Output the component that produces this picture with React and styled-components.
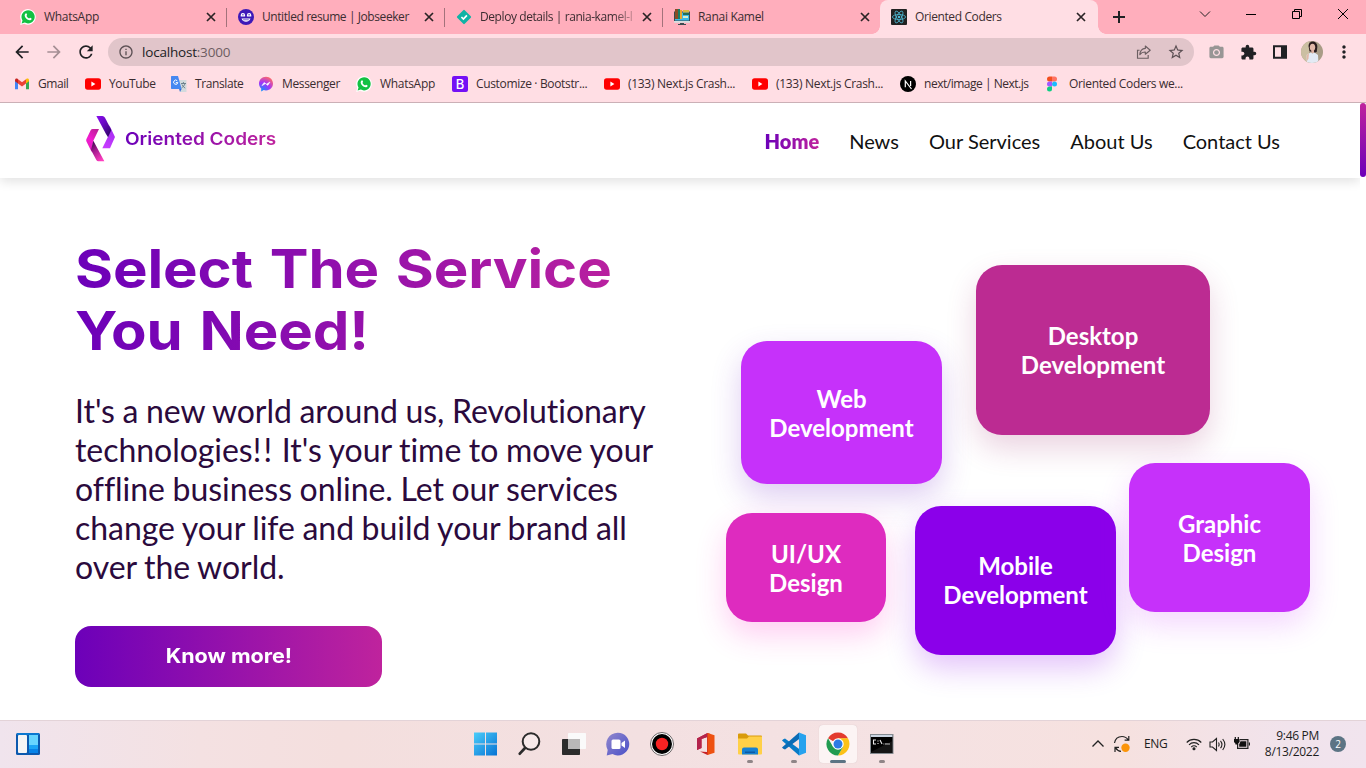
import React from "react";
import styled, { createGlobalStyle, css } from "styled-components";
import {
  MdArrowBack, MdArrowForward, MdRefresh, MdInfoOutline, MdStarBorder,
  MdPhotoCamera, MdExtension, MdMoreVert,
} from "react-icons/md";

const brand = "linear-gradient(90deg, #6c00b9 0%, #bf239d 100%)";

const GlobalStyle = createGlobalStyle`
  * { box-sizing: border-box; }
  body { margin: 0; background: #fff; overflow: hidden; font-family: "Open Sans", "Noto Sans", sans-serif; }
  h1, p { margin: 0; }
  svg { display: block; flex: none; }
`;

const Screen = styled.div`
  width: 1366px;
  height: 768px;
  display: flex;
  flex-direction: column;
  overflow: hidden;
`;

/* ---------- browser chrome ---------- */
const TabStrip = styled.div`
  height: 34px;
  flex: none;
  display: flex;
  padding-left: 8px;
  background: #ffaebc;
`;

const Tab = styled.div`
  position: relative;
  width: 218px;
  height: 34px;
  display: flex;
  align-items: center;
  padding: 0 ${(p) => (p.$active ? 12 : 10)}px 0 ${(p) => (p.$active ? 11 : 12)}px;
  color: #3c2d31;
  ${(p) => p.$divider && css`
    &::after { content: ""; position: absolute; right: -1px; top: 8px; width: 1px; height: 19px; background: #a3727b; }
  `}
  ${(p) => p.$active && css`
    background: #ffdee4;
    border-radius: 8px 8px 0 0;
    &::before, &::after { content: ""; position: absolute; bottom: 0; width: 8px; height: 8px; }
    &::before { left: -8px; background: radial-gradient(circle at 0 0, transparent 7.5px, #ffdee4 8px); }
    &::after { right: -8px; background: radial-gradient(circle at 100% 0, transparent 7.5px, #ffdee4 8px); }
  `}
`;

const Label = styled.span`
  font-size: 12px;
  line-height: 16px;
  white-space: nowrap;
  letter-spacing: ${(p) => p.$track ?? -0.3}px;
`;

const TabLabel = styled(Label)`
  flex: 1;
  margin-left: 8px;
  ${(p) => p.$fade && css`mask-image: linear-gradient(90deg, #000 82%, rgba(0, 0, 0, 0.1) 98%);`}
`;

const NewTab = styled.div`
  width: 42px;
  display: flex;
  align-items: center;
  justify-content: center;
`;

const WindowButtons = styled.div`
  margin-left: auto;
  display: flex;
  height: 28px;
  align-items: center;
`;

const WindowButton = styled.div`
  width: 46px;
  display: flex;
  justify-content: center;
`;

const Toolbar = styled.div`
  height: 36px;
  flex: none;
  display: flex;
  align-items: center;
  padding-left: 6px;
  padding-right: 6px;
  background: #ffdee4;
  color: #202124;
`;

const ToolSlot = styled.div`
  width: 32px;
  height: 32px;
  display: flex;
  align-items: center;
  justify-content: center;
  color: ${(p) => p.$color || "#202124"};
`;

const AddressBar = styled.div`
  width: 1086px;
  height: 28px;
  margin: 0 6px;
  border-radius: 14px;
  background: #e1c5ca;
  display: flex;
  align-items: center;
  padding: 0 2px 0 10px;
`;

const Url = styled.span`
  flex: 1;
  margin-left: 8px;
  font-size: 13.5px;
  letter-spacing: -0.2px;
  color: #202124;
  span { color: #6d5d61; }
`;

const Bookmarks = styled.div`
  height: 33px;
  flex: none;
  display: flex;
  align-items: center;
  padding: 0 0 4px 14px;
  background: #ffdee4;
  border-bottom: 1px solid #cbb0b6;
`;

const Bookmark = styled.div`
  width: ${(p) => p.$w}px;
  display: flex;
  align-items: center;
  gap: 8px;
  color: #3a2c30;
`;

/* ---------- web page ---------- */
const Viewport = styled.div`
  height: 617px;
  flex: none;
  display: flex;
  overflow: hidden;
  background: #fff;
`;

const Page = styled.main`
  width: 1360px;
  overflow: hidden;
`;

const ScrollTrack = styled.div`
  width: 6px;
`;

const ScrollThumb = styled.div`
  height: 74px;
  border-radius: 3px;
  background: linear-gradient(#bf239d, #6c00b9);
`;

const Navbar = styled.header`
  height: 75px;
  display: flex;
  align-items: center;
  justify-content: space-between;
  padding: 0 80px 0 86px;
  background: #fff;
  box-shadow: 0 4px 10px rgba(0, 0, 0, 0.11);
`;

const Brand = styled.div`
  display: flex;
  align-items: center;
  gap: 10px;
  padding-bottom: 4px;
`;

const gradientText = css`
  background: ${brand};
  background-clip: text;
  -webkit-background-clip: text;
  color: transparent;
`;

const Wordmark = styled.span`
  ${gradientText}
  font: 600 17.4px/24px Inter, sans-serif;
  white-space: nowrap;
  transform: scaleX(${(p) => p.$stretch});
  transform-origin: left;
`;

const NavLinks = styled.nav`
  display: flex;
  gap: 30px;
  padding-top: 1px;
`;

const NavLink = styled.a`
  font: 400 20px/24px Lato, sans-serif;
  color: #111;
  ${(p) => p.$active && css`font-weight: 800; ${gradientText}`}
`;

const Hero = styled.section`
  display: flex;
  padding: 60px 0 0 75px;
`;

const Copy = styled.div`
  width: 651px;
  flex: none;
`;

const Title = styled.h1`
  ${gradientText}
  width: 540px;
  font: 700 53.8px/61.6px Inter, sans-serif;
  word-spacing: 3px;
  letter-spacing: -0.1px;
  white-space: pre-line;
  transform: scaleX(${(p) => p.$stretch});
  transform-origin: left;
`;

const Lead = styled.p`
  width: 600px;
  margin-top: 30px;
  font: 400 32px Lato, sans-serif;
  line-height: 39px;
  letter-spacing: -0.04px;
  word-spacing: -0.55px;
  color: #2b0a3d;
`;

const Loose = styled.span`
  letter-spacing: 2.2px;
`;

const CallToAction = styled.button`
  display: flex;
  align-items: center;
  justify-content: center;
  width: 307px;
  height: 61px;
  margin-top: 40px;
  padding: 0 0 2px;
  border: 0;
  border-radius: 16px;
  background: ${brand};
  color: #fff;
  font: 700 19.4px Inter, sans-serif;
  span { transform: scaleX(1.11); }
`;

const Services = styled.div`
  width: 634px;
  flex: none;
  padding-top: 27px;
`;

const ServiceRow = styled.div`
  display: flex;
  align-items: flex-start;
  margin-top: ${(p) => p.$top || 0}px;
`;

const ServiceCard = styled.div`
  width: ${(p) => p.$w}px;
  height: ${(p) => p.$h}px;
  margin: ${(p) => p.$top || 0}px 0 0 ${(p) => p.$left || 0}px;
  padding-bottom: ${(p) => p.$lift || 0}px;
  flex: none;
  display: flex;
  align-items: center;
  justify-content: center;
  text-align: center;
  white-space: pre-line;
  border-radius: 26px;
  background: ${(p) => p.$color};
  box-shadow: 0 13px 30px ${(p) => p.$shadow};
  color: #fff;
  font: 700 24px Lato, sans-serif;
  line-height: 29px;
`;

/* ---------- taskbar ---------- */
const Taskbar = styled.footer`
  height: 48px;
  flex: none;
  display: flex;
  align-items: center;
  padding-bottom: 1px;
  border-top: 1px solid #e3d3d8;
  background: linear-gradient(90deg, #f0e4ed 0, #f4e1e2 200px, #f4dfde 340px, #f3e0e1 640px, #f5e2e3 900px, #f6e1df 1120px, #f1e3ec 1290px, #f1e4ee 100%);
  color: #1d1d1d;
`;

const Widgets = styled.div`
  width: 464px;
  padding-left: 16px;
`;

const TaskButton = styled.div`
  position: relative;
  width: 44px;
  height: 46px;
  display: flex;
  align-items: center;
  justify-content: center;
  &::before {
    content: "";
    position: absolute;
    inset: 4px 3px 4px;
    border-radius: 4px;
    background: ${(p) => (p.$active ? "#fcf4f4" : "transparent")};
    box-shadow: ${(p) => (p.$active ? "0 0 1px #cdbdbf" : "none")};
  }
  &::after {
    content: "";
    position: absolute;
    bottom: 4px;
    height: 3px;
    border-radius: 2px;
    width: ${(p) => (p.$active ? 16 : p.$running ? 6 : 0)}px;
    background: ${(p) => (p.$active ? "#5c7484" : "#8f8587")};
  }
  svg { position: relative; }
`;

const Tray = styled.div`
  margin-left: auto;
  padding-right: 20px;
  display: flex;
  align-items: center;
`;

const TrayItem = styled.div`
  margin-left: ${(p) => p.$gap}px;
`;

const Language = styled(Label)`
  margin-left: 13px;
  width: 25px;
`;

const Clock = styled.div`
  width: 62px;
  margin-left: 7px;
  text-align: right;
  display: flex;
  flex-direction: column;
`;

const Notices = styled.div`
  width: 16px;
  height: 16px;
  margin-left: 11px;
  border-radius: 50%;
  background: #5c7484;
  color: #fff;
  font-size: 10px;
  line-height: 16px;
  text-align: center;
`;

const Badge = styled.div`
  width: 16px;
  height: 16px;
  flex: none;
  display: flex;
  align-items: center;
  justify-content: center;
  border-radius: ${(p) => p.$round};
  background: ${(p) => p.$bg};
  color: #fff;
  font: ${(p) => p.$font || "700 11px Inter, sans-serif"};
`;

/* ---------- icons ---------- */
const Svg = ({ s = 16, box = 16, children, ...rest }) => (
  <svg width={s} height={s} viewBox={`0 0 ${box} ${box}`} fill="none" {...rest}>{children}</svg>
);

const Close = () => (
  <Svg s={10} box={10} stroke="#2a2325" strokeWidth="1.700"><path d="m1 1 8 8M9 1 1 9" /></Svg>
);
const Plus = () => (
  <Svg s={12} box={12} stroke="#202124" strokeWidth="2"><path d="M6 0v12M0 6h12" /></Svg>
);
const WhatsApp = () => (
  <Svg>
    <path d="M.2 15.900 1.200 11.800A7.800 7.800 0 1 1 4.300 14.800Z" fill="#fff" />
    <path d="M1.600 14.500 2.500 11.400A6.600 6.600 0 1 1 4.800 13.600Z" fill="#12c143" />
    <path d="M5.600 4.400c.4-.3.8-.2 1 .3l.5 1.100c.1.4-.5.8-.6 1.100.6 1.200 1.400 2 2.600 2.500.4-.1.7-.8 1.100-.7l1.300.7c.4.5-.3 1.700-1.300 1.900-2.600.3-5.800-2.800-5.500-5.200.1-.7.4-1.300.9-1.700Z" fill="#fff" />
  </Svg>
);
const Jobseeker = () => (
  <Svg>
    <circle cx="8" cy="8" r="8" fill="#3d18b8" />
    <path d="M3.300 6.800V6.200a1.600 1.600 0 0 1 3.200 0v.6ZM9.500 6.800V6.200a1.600 1.600 0 0 1 3.200 0v.6Z" stroke="#fff" strokeWidth="1.200" />
    <path d="M3.500 9.600h9c-.8 2.200-2.500 3.200-4.500 3.200s-3.700-1-4.500-3.200Z" fill="#fff" />
    <path d="M5.200 10.800h5.600" stroke="#3d18b8" strokeWidth=".7" />
  </Svg>
);
const Deploy = () => (
  <Svg>
    <rect x="2.700" y="2.700" width="10.600" height="10.600" rx="1" transform="rotate(45 8 8)" fill="#10b3a5" />
    <path d="m5.400 8 2 2 3.500-3.700" stroke="#fff" strokeWidth="1.700" />
  </Svg>
);
const Library = () => (
  <Svg>
    <rect x=".5" y="3" width="15" height="9" fill="#3bb9e8" stroke="#3a4a50" />
    <path d="M0 12h16v1.800H0Z" fill="#d9dcdd" />
    <path d="M6 14h4v1H6ZM4 15h8v1H4Z" fill="#3a4a50" />
    <path d="M1 0h3v10H1Z" fill="#8b4b25" /><path d="M4 0h2v10H4Z" fill="#197d66" /><path d="M6 1h2v9H6Z" fill="#e8a52d" />
    <path d="M9 1h6v2.500H9Z" fill="#d8b83e" /><path d="M9 4h6v2H9Z" fill="#246d58" /><path d="M9 7h5v2H9Z" fill="#d9edc9" />
  </Svg>
);
const ReactLogo = () => (
  <Svg>
    <rect width="16" height="16" rx="1" fill="#222" />
    <g stroke="#4eb8d4" strokeWidth=".8">
      <ellipse cx="8" cy="8" rx="6.600" ry="2.500" />
      <ellipse cx="8" cy="8" rx="6.600" ry="2.500" transform="rotate(60 8 8)" />
      <ellipse cx="8" cy="8" rx="6.600" ry="2.500" transform="rotate(120 8 8)" />
    </g>
    <circle cx="8" cy="8" r="1.300" fill="#4eb8d4" />
  </Svg>
);
const Gmail = () => (
  <Svg>
    <path d="M1 4v9.300h3V6.500Z" fill="#4285f4" />
    <path d="M15 4v9.300h-3V6.500Z" fill="#34a853" />
    <path d="M1 4.200C1 2.600 2.600 2 3.800 3L4 3.200V7.600L1 5.300Z" fill="#c5221f" />
    <path d="M15 4.200c0-1.600-1.600-2.200-2.800-1.200l-.2.200v4.400l3-2.300Z" fill="#fbbc04" />
    <path d="M4 3.200 8 6.200l4-3v4.400l-4 3-4-3Z" fill="#ea4335" />
  </Svg>
);
const YouTube = () => (
  <Svg><rect y="2.300" width="16" height="11.400" rx="2.600" fill="#f00" /><path d="M6.400 5.600v4.800l4-2.400Z" fill="#fff" /></Svg>
);
const Translate = () => (
  <Svg>
    <path d="M6 4h9.500v12H9Z" fill="#d3dadd" />
    <path d="M0 .7A.7.7 0 0 1 .7 0H7l3.600 13H.7a.7.7 0 0 1-.7-.7Z" fill="#4688f1" />
    <path d="m8.200 13 2.400 0L9 16Z" fill="#3367d6" />
    <path d="M6.300 4.800A2.100 2.100 0 1 0 6.800 6.600H4.800" stroke="#fff" strokeWidth="1" />
    <path d="M10 7.500h5M12.400 6v1.500M14 7.500c-.5 2-2 3.500-3.400 4.500M11 8.500c.6 1.500 1.800 2.800 3.200 3.700" stroke="#657b86" strokeWidth=".9" />
  </Svg>
);
const Messenger = () => (
  <Svg>
    <defs><radialGradient id="msg" cx=".2" cy="1" r="1.100"><stop stopColor="#0695ff" /><stop offset=".55" stopColor="#a334fa" /><stop offset="1" stopColor="#ff6968" /></radialGradient></defs>
    <path d="M8 .8C3.800.8 1 3.800 1 7.600c0 2 .8 3.700 2.200 4.900v2.900l2.500-1.300c.7.2 1.500.3 2.300.3 4.200 0 7-3 7-6.800S12.200.8 8 .8Z" fill="url(#msg)" />
    <path d="m3.900 9.700 2.200-3.300 2.200 1.800 3.700-2.200-2.200 3.400-2.200-1.800Z" fill="#fff" stroke="#fff" strokeWidth=".5" />
  </Svg>
);
const Figma = () => (
  <Svg>
    <path d="M7 .5H4.500a2.500 2.500 0 0 0 0 5H7Z" fill="#f24e1e" /><path d="M7 .5h2.500a2.500 2.500 0 0 1 0 5H7Z" fill="#ff7262" />
    <path d="M7 5.500H4.500a2.500 2.500 0 0 0 0 5H7Z" fill="#a259ff" /><circle cx="9.500" cy="8" r="2.500" fill="#1abcfe" />
    <path d="M7 10.500H4.500A2.500 2.500 0 1 0 7 13Z" fill="#0acf83" />
  </Svg>
);
const NextLogo = () => (
  <Svg><circle cx="8" cy="8" r="8" fill="#000" /><path d="M5.300 11.300V5l6.200 8M10.600 5v5" stroke="#fff" strokeWidth="1.200" /></Svg>
);
const Share = () => (
  <Svg s={16} box={18} stroke="#6b5f62" strokeWidth="1.300">
    <path d="M4 7H1.700v9h12v-3.500" /><path d="M10.500 2.300 16 7l-5.500 4.500V9C8 8.800 6 9.700 4.300 12 4.600 8.300 6.500 5.300 10.500 5Z" strokeLinejoin="round" />
  </Svg>
);
const SidePanel = () => (
  <Svg><path d="M2 2.300h12v11.400H2Z" stroke="#202124" strokeWidth="2" /><path d="M9 2h5v12H9Z" fill="#202124" /></Svg>
);
const Avatar = () => (
  <Svg s={22} box={22}>
    <defs><clipPath id="av"><circle cx="11" cy="11" r="11" /></clipPath></defs>
    <g clipPath="url(#av)">
      <path d="M0 0h22v22H0Z" fill="#a99c86" /><path d="M0 0h8v22H0Z" fill="#cbbfa2" />
      <path d="M7.500 5c0-3 2-4.500 4.500-4.500S16.500 3 16.300 6l-.6 5-3 1-4.200-2Z" fill="#2a1d1e" />
      <ellipse cx="11.500" cy="6.300" rx="2.700" ry="3.500" fill="#e2b9a9" />
      <path d="M10.300 9h2.700v3h-2.700Z" fill="#dcb0a0" />
      <path d="M5.500 14 9.500 11.500l2 1 2-1 3.500 2.500.5 9H6Z" fill="#e3eaf4" />
      <path d="M5.500 14 8 12.500l-.5 5L6 20Z" fill="#e2b9a9" />
    </g>
  </Svg>
);
const BrandMark = () => (
  <svg width="29" height="46" viewBox="0 0 87 138">
    <defs>
      <linearGradient id="b1" x1="0" y1="0" x2=".8" y2="1"><stop stopColor="#8a0df0" /><stop offset=".45" stopColor="#6a08c4" /><stop offset="1" stopColor="#2e0466" /></linearGradient>
      <linearGradient id="b2" x1=".5" y1="0" x2=".3" y2="1"><stop stopColor="#a02af0" /><stop offset="1" stopColor="#c83cff" /></linearGradient>
      <linearGradient id="b3" x1=".7" y1="0" x2=".2" y2="1"><stop stopColor="#c0209a" /><stop offset=".5" stopColor="#f21bd0" /><stop offset="1" stopColor="#e220c0" /></linearGradient>
      <linearGradient id="b4" x1=".2" y1="0" x2=".7" y2="1"><stop stopColor="#3c0a50" /><stop offset=".4" stopColor="#a01a8c" /><stop offset="1" stopColor="#ff3fc0" /></linearGradient>
    </defs>
    <path d="M70 28 87 63 72 97H49L66 62Z" fill="url(#b2)" />
    <path d="M31 0H49Q54 0 57 5L76 42 66 64 60 54Z" fill="url(#b1)" />
    <path d="M20 39H39L22 74 17 108 1 76Q0 73 1 70L14 43Q16 39 20 39Z" fill="url(#b3)" />
    <path d="M22 74 55 136H37Q33 136 31 132L15 102Z" fill="url(#b4)" />
  </svg>
);

const WidgetIcon = () => (
  <Svg s={24} box={24}>
    <rect y="1" width="24" height="22" rx="1.500" fill="#0c59ae" /><path d="M1 1h22v2H1Z" fill="#0b78d0" />
    <rect x="2" y="3" width="9" height="18" rx="1" fill="#f5f5f5" />
    <path d="M13 3h9v10h-9Z" fill="#67d5ff" /><path d="M13 13h9v4h-9Z" fill="#1ba5f6" /><path d="M13 17h9v4h-9Z" fill="#0783e8" />
  </Svg>
);
const StartIcon = () => (
  <Svg s={24} box={24}>
    <defs><linearGradient id="win" x1="0" y1="0" x2="1" y2="1"><stop stopColor="#4bcdfa" /><stop offset="1" stopColor="#0673d4" /></linearGradient></defs>
    <path d="M0 .5h11v11H0ZM12 .5h11v11H12ZM0 12.500h11v11H0ZM12 12.500h11v11H12Z" fill="url(#win)" />
  </Svg>
);
const SearchIcon = () => (
  <Svg s={24} box={24}><circle cx="13" cy="9.500" r="8.300" stroke="#2b2b2b" strokeWidth="2" fill="#ffffff55" /><path d="m7 16-5.200 5.700" stroke="#2b2b2b" strokeWidth="2.700" strokeLinecap="round" /></Svg>
);
const TaskViewIcon = () => (
  <Svg s={24} box={24}><rect y="7" width="18" height="16" rx=".8" fill="#2c2c2c" /><rect x="6" y="1" width="18" height="16" rx=".8" fill="#fafafa" /><path d="M6 7h12v10H6Z" fill="#b9b7b7" /></Svg>
);
const ChatIcon = () => (
  <Svg s={24} box={24}>
    <defs><linearGradient id="chat" x1="0" y1="0" x2="1" y2="1"><stop stopColor="#9288cd" /><stop offset="1" stopColor="#4a50c8" /></linearGradient></defs>
    <path d="M11.700 .8A11.300 11.300 0 1 1 6.500 22L.7 23.500 1.700 18A11.500 11.500 0 0 1 11.700 .8Z" fill="url(#chat)" />
    <rect x="5.500" y="7.500" width="9" height="9.500" rx="1.500" fill="#fff" /><path d="m15.500 11 3.500-2.500v7.500l-3.500-2.400Z" fill="#fff" />
  </Svg>
);
const RecordIcon = () => (
  <Svg s={24} box={24}><circle cx="12" cy="12" r="11.500" fill="#fff" stroke="#6c6667" /><circle cx="12" cy="12" r="10" fill="#000" /><circle cx="12" cy="12" r="6.200" fill="#f82222" /></Svg>
);
const OfficeIcon = () => (
  <Svg s={24} box={24}>
    <path d="M3 6.500 13.500 1l3 1v18.500L13.500 23 6 19.500l7 .5V5L7.500 7v9L3 18Z" fill="#c62228" />
    <path d="M3 6.500 13.500 1v4L7.500 7v9L3 18Z" fill="#b3234c" /><path d="M13.500 1 20.500 3.300v17.400L13.500 23Z" fill="#ee5111" />
  </Svg>
);
const FolderIcon = () => (
  <Svg s={24} box={24}>
    <path d="M0 2.500a1 1 0 0 1 1-1h7l2 2h13a1 1 0 0 1 1 1V8H0Z" fill="#d99b0b" /><path d="M0 6.500h9l2-2h13v17a1 1 0 0 1-1 1H1a1 1 0 0 1-1-1Z" fill="#ffd048" />
    <path d="M4 22.500v-5a2 2 0 0 1 2-2h12a2 2 0 0 1 2 2v5Z" fill="#1680d2" /><path d="M7 19.500h10v1.500H7Z" fill="#0b5aa4" />
  </Svg>
);
const CodeIcon = () => (
  <Svg s={24} box={24}>
    <path d="M1.300 7.200 0 8.400 17 23.500l1.500-5.500L3 6.500Z" fill="#087bc7" /><path d="M1.300 16.800 0 15.600 17 .5 18.500 6 3 17.500Z" fill="#0a6bb5" />
    <path d="M17 .4 24 3.300v17.400L17 23.600Z" fill="#27a2ee" />
  </Svg>
);
const ChromeIcon = () => (
  <Svg s={24} box={24}>
    <path d="M12 12 2.040 6.250A11.500 11.500 0 0 1 21.960 6.250L21.960 6.500H12Z" fill="#e33b2e" />
    <path d="M12 12V6.300h9.980A11.500 11.500 0 0 1 12 23.500l5-8.600Z" fill="#fbc116" />
    <path d="M12 12l5 2.900-5 8.600A11.500 11.500 0 0 1 2.040 6.250L7 14.800Z" fill="#219b50" />
    <circle cx="12" cy="12" r="5.700" fill="#fff" /><circle cx="12" cy="12" r="4.500" fill="#2c7be5" />
  </Svg>
);
const TerminalIcon = () => (
  <Svg s={24} box={24}>
    <rect x=".5" y="2.500" width="22.500" height="19" fill="#000" stroke="#858b91" /><path d="M1 3h21.500v2H1Z" fill="#cad5e2" />
    <path d="M6 8H3.500v4H6M8 8.500v1M8 11v1M10 8l2 4M13.500 12h.8M15 12h5" stroke="#e8e8e8" strokeWidth="1.100" /><path d="M1 20 22.500 9v12H1Z" fill="#444" opacity=".3" />
  </Svg>
);
const SyncIcon = () => (
  <Svg s={18} box={18} stroke="#222" strokeWidth="1.200">
    <path d="M1.500 8C2.200 3.800 5.300 1.500 9 1.500c2.700 0 4.700 1.200 6.300 3.500M15.800 1v4.200h-4.200M8 16.300c-2.600-.2-4.300-1.500-5.500-3.700M2 17v-4.600h4" />
    <circle cx="12.500" cy="12.700" r="4.200" fill="#fb9409" stroke="none" />
  </Svg>
);
const WifiIcon = () => (
  <Svg s={16} stroke="#222" strokeWidth="1.100"><path d="M.7 6.500C4.700 2.300 11.300 2.300 15.300 6.500M3 8.800c2.800-2.900 7.200-2.900 10 0M5.300 11c1.600-1.600 3.800-1.600 5.400 0" /><circle cx="8" cy="12.700" r="1" fill="#222" /></Svg>
);
const VolumeIcon = () => (
  <Svg s={17} box={17} stroke="#222" strokeWidth="1.100"><path d="M1 6h2.500L7.500 2.500v12L3.500 11H1ZM9.500 6.500c.8 1.300.8 2.700 0 4M11.500 4.800c1.800 2.300 1.800 5.100 0 7.400M13.700 3c2.600 3.300 2.600 7.700 0 11" /></Svg>
);
const BatteryIcon = () => (
  <Svg s={16}>
    <path d="M6 3.600h7.900V12.400H3.600V8" stroke="#222" strokeWidth="1.200" />
    <path d="M6.500 5.300h5.800v5.500H5.200V8.500Z" fill="#111" />
    <path d="M15.400 6.500v3" stroke="#222" strokeWidth="1.200" />
    <path d="M1.300 1v2.500M4.300 1v2.500" stroke="#111" strokeWidth="1.200" />
    <path d="M0 3h5.600v3L4.200 7.500v1H1.400v-1L0 6Z" fill="#111" />
  </Svg>
);

const tabs = [
  { icon: <WhatsApp />, text: "WhatsApp", divider: true },
  { icon: <Jobseeker />, text: "Untitled resume | Jobseeker", divider: true, track: -0.42 },
  { icon: <Deploy />, text: "Deploy details | rania-kamel-l", divider: true, fade: true, track: -0.42 },
  { icon: <Library />, text: "Ranai Kamel" },
  { icon: <ReactLogo />, text: "Oriented Coders", active: true, track: -0.38 },
];

const bookmarks = [
  [<Gmail />, "Gmail", 71, -0.45], [<YouTube />, "YouTube", 86, -0.4], [<Translate />, "Translate", 87, -0.4],
  [<Messenger />, "Messenger", 98, -0.36], [<WhatsApp />, "WhatsApp", 96],
  [<Badge $bg="#7410f5" $round="2px" $font="500 13px Inter, sans-serif">B</Badge>, "Customize · Bootstr...", 152, -0.34],
  [<YouTube />, "(133) Next.js Crash...", 148], [<YouTube />, "(133) Next.js Crash...", 148],
  [<NextLogo />, "next/image | Next.js", 145, -0.48], [<Figma />, "Oriented Coders we...", 150, -0.34],
];

const apps = [
  [StartIcon], [SearchIcon], [TaskViewIcon], [ChatIcon], [RecordIcon], [OfficeIcon],
  [FolderIcon, true], [CodeIcon, true], [ChromeIcon, true, true], [TerminalIcon, true],
];

export default function App() {
  return (
    <Screen>
      <GlobalStyle />
      <TabStrip>
        {tabs.map((t) => (
          <Tab key={t.text} $active={t.active} $divider={t.divider}>
            {t.icon}
            <TabLabel $fade={t.fade} $track={t.track}>{t.text}</TabLabel>
            <Close />
          </Tab>
        ))}
        <NewTab><Plus /></NewTab>
        <WindowButtons>
          <WindowButton><Svg s={12} box={12} stroke="#222"><path d="m1 3.500 5 5 5-5" /></Svg></WindowButton>
          <WindowButton><Svg s={10} box={10} stroke="#000"><path d="M0 5.500h10" /></Svg></WindowButton>
          <WindowButton><Svg s={10} box={10} stroke="#000"><path d="M.5 2.500h7v7h-7ZM2.500 2.500v-2h7v7h-2" /></Svg></WindowButton>
          <WindowButton><Svg s={10} box={10} stroke="#000"><path d="m0 0 10 10M10 0 0 10" /></Svg></WindowButton>
        </WindowButtons>
      </TabStrip>
      <Toolbar>
        <ToolSlot><MdArrowBack size={20} /></ToolSlot>
        <ToolSlot $color="#a58f94"><MdArrowForward size={20} /></ToolSlot>
        <ToolSlot><MdRefresh size={20} /></ToolSlot>
        <AddressBar>
          <MdInfoOutline size={16} color="#5c5054" />
          <Url>localhost<span>:3000</span></Url>
          <ToolSlot><Share /></ToolSlot>
          <ToolSlot $color="#5c5054"><MdStarBorder size={18} /></ToolSlot>
        </AddressBar>
        <ToolSlot $color="#989695"><MdPhotoCamera size={17} /></ToolSlot>
        <ToolSlot><MdExtension size={17} /></ToolSlot>
        <ToolSlot><SidePanel /></ToolSlot>
        <ToolSlot><Avatar /></ToolSlot>
        <ToolSlot><MdMoreVert size={20} /></ToolSlot>
      </Toolbar>
      <Bookmarks>
        {bookmarks.map(([icon, text, w, track], i) => (
          <Bookmark key={i} $w={w}>{icon}<Label $track={track}>{text}</Label></Bookmark>
        ))}
      </Bookmarks>

      <Viewport>
        <Page>
          <Navbar>
            <Brand><BrandMark /><Wordmark $stretch={1.093}>Oriented Coders</Wordmark></Brand>
            <NavLinks>
              <NavLink $active>Home</NavLink>
              <NavLink>News</NavLink>
              <NavLink>Our Services</NavLink>
              <NavLink>About Us</NavLink>
              <NavLink>Contact Us</NavLink>
            </NavLinks>
          </Navbar>
          <Hero>
            <Copy>
              <Title $stretch={1.08}>{"Select The Service\nYou Need!"}</Title>
              <Lead>
                It's a new world around us, Revolutionary technologies<Loose>!!</Loose> It's your time to move your
                offline business online. Let our services change your life and build your brand all
                over the world.
              </Lead>
              <CallToAction><span>Know more!</span></CallToAction>
            </Copy>
            <Services>
              <ServiceRow>
                <ServiceCard $w={201} $h={143} $top={76} $left={15} $color="#c631fa" $shadow="rgba(115, 45, 200, 0.24)">{"Web\nDevelopment"}</ServiceCard>
                <ServiceCard $w={234} $h={170} $left={34} $color="#bc2b92" $shadow="rgba(150, 30, 100, 0.2)">{"Desktop\nDevelopment"}</ServiceCard>
              </ServiceRow>
              <ServiceRow $top={-21}>
                <ServiceCard $w={160} $h={109} $top={50} $color="#de2bbf" $shadow="rgba(255, 50, 200, 0.24)">{"UI/UX\nDesign"}</ServiceCard>
                <ServiceCard $w={201} $h={149} $top={43} $left={29} $lift={2} $color="#8b00ea" $shadow="rgba(139, 0, 234, 0.24)">{"Mobile\nDevelopment"}</ServiceCard>
                <ServiceCard $w={181} $h={149} $left={13} $color="#c631fa" $shadow="rgba(198, 49, 250, 0.2)">{"Graphic\nDesign"}</ServiceCard>
              </ServiceRow>
            </Services>
          </Hero>
        </Page>
        <ScrollTrack><ScrollThumb /></ScrollTrack>
      </Viewport>

      <Taskbar>
        <Widgets><WidgetIcon /></Widgets>
        {apps.map(([Icon, running, active], i) => (
          <TaskButton key={i} $running={running} $active={active}><Icon /></TaskButton>
        ))}
        <Tray>
          <Svg s={12} box={12} stroke="#222" strokeWidth="1.300"><path d="m.5 8.500 5.500-5.500 5.500 5.500" /></Svg>
          <TrayItem $gap={9}><SyncIcon /></TrayItem>
          <Language>ENG</Language>
          <TrayItem $gap={17}><WifiIcon /></TrayItem>
          <TrayItem $gap={7}><VolumeIcon /></TrayItem>
          <TrayItem $gap={8}><BatteryIcon /></TrayItem>
          <Clock><Label>9:46 PM</Label><Label>8/13/2022</Label></Clock>
          <Notices>2</Notices>
        </Tray>
      </Taskbar>
    </Screen>
  );
}
